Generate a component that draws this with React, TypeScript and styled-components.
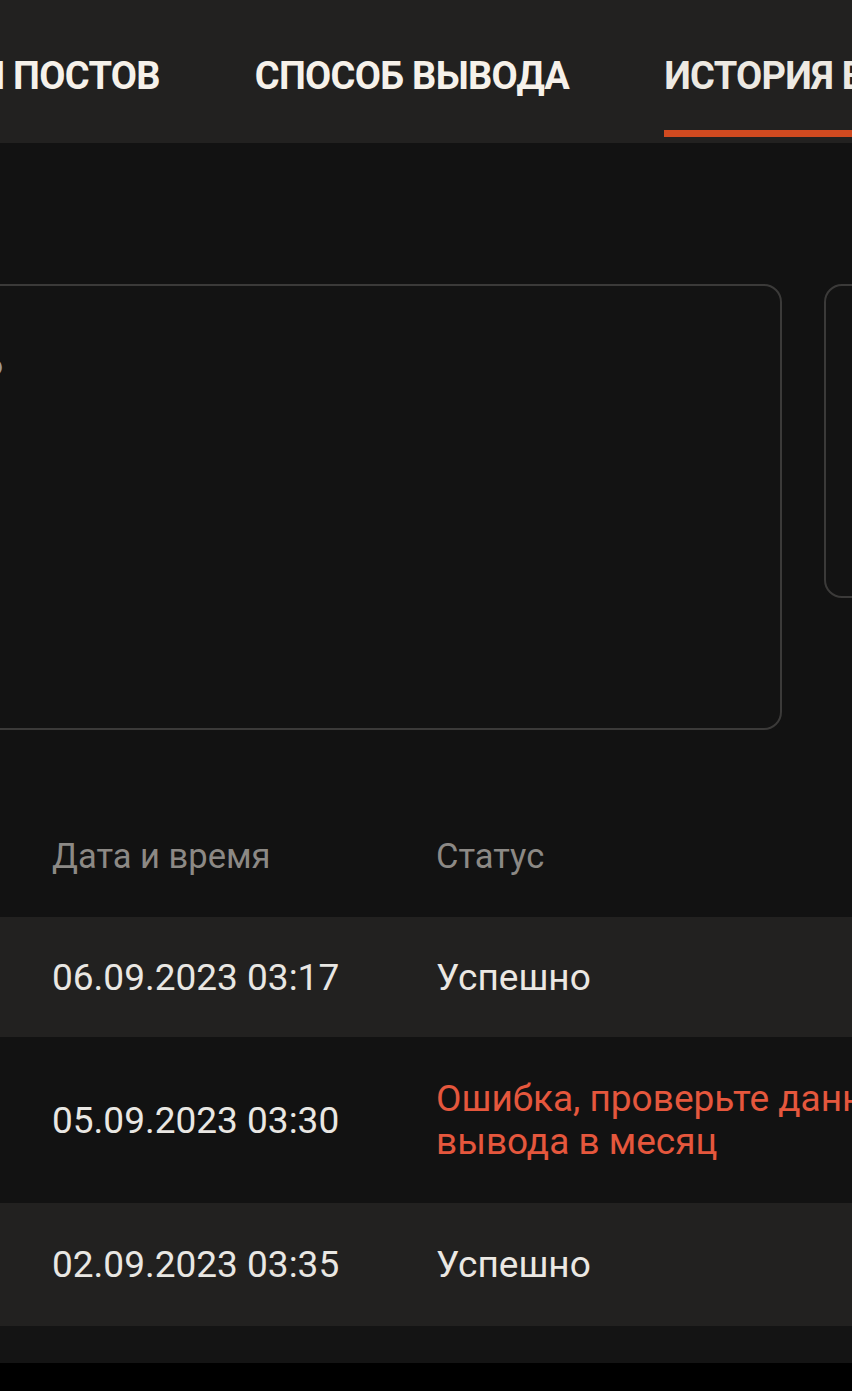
import styled, { createGlobalStyle } from 'styled-components';

const GlobalStyle = createGlobalStyle`
  html, body {
    margin: 0;
    padding: 0;
    background: #121212;
  }
  body {
    font-family: Roboto, 'Noto Sans', sans-serif;
    color: #e9e7e3;
  }
`;

const Screen = styled.div`
  width: 852px;
  height: 1391px;
  overflow: hidden;
  display: flex;
  flex-direction: column;
  background: #121212;
`;

const TabBar = styled.nav`
  height: 143px;
  flex-shrink: 0;
  background: #222120;
  display: flex;
  align-items: stretch;
  gap: 95px;
  overflow: hidden;
  white-space: nowrap;
`;

const Tab = styled.div<{ $active?: boolean; $shift?: number }>`
  display: flex;
  align-items: center;
  padding-top: 22px;
  margin-left: ${(p) => (p.$shift ? `${p.$shift}px` : '0')};
  font-size: 38px;
  font-weight: 700;
  text-transform: uppercase;
  letter-spacing: -0.7px;
  color: ${(p) => (p.$active ? '#ede9e2' : '#f6f1ea')};
  border-bottom: 7px solid ${(p) => (p.$active ? '#d04a20' : 'transparent')};
  margin-bottom: 6px;
`;

const Cards = styled.section`
  display: flex;
  gap: 42px;
  margin-top: 141px;
  height: 446px;
  align-items: flex-start;
`;

const Card = styled.div<{ $w: number; $h: number; $shift?: number }>`
  flex-shrink: 0;
  box-sizing: border-box;
  width: ${(p) => p.$w}px;
  height: ${(p) => p.$h}px;
  margin-left: ${(p) => (p.$shift ? `${p.$shift}px` : '0')};
  border: 2px solid #3b3a39;
  border-radius: 18px;
  background: #131313;
  padding: 63px 0 0 0;
  display: flex;
  justify-content: flex-end;
`;

const CardLabel = styled.span`
  align-self: flex-start;
  font-size: 28px;
  color: #9c9994;
  margin-right: 777px;
`;

const Table = styled.section`
  margin-top: 94px;
  display: flex;
  flex-direction: column;
`;

const HeadRow = styled.div`
  display: grid;
  grid-template-columns: 384px 1fr;
  box-sizing: border-box;
  padding: 12px 0 0 52px;
  height: 93px;
  align-items: start;
  font-size: 34.5px;
  color: #8c8985;
`;

const Row = styled.div<{ $h: number; $alt?: boolean }>`
  display: grid;
  grid-template-columns: 384px 1fr;
  padding-left: 52px;
  height: ${(p) => p.$h}px;
  align-items: center;
  background: ${(p) => (p.$alt ? '#222120' : '#121212')};
  font-size: 37px;
  color: #e9e7e3;
  white-space: nowrap;
`;

const Status = styled.div<{ $error?: boolean }>`
  color: ${(p) => (p.$error ? '#e5573d' : '#ebe8e3')};
  line-height: 43px;
`;

const Gap = styled.div`
  height: 37px;
  background: #141414;
`;

const NavBar = styled.div`
  flex: 1;
  background: #000;
`;

const rows = [
  { date: '06.09.2023 03:17', status: ['Успешно'], h: 120, alt: true },
  {
    date: '05.09.2023 03:30',
    status: ['Ошибка, проверьте данные или лимит', 'вывода в месяц'],
    h: 166,
    error: true,
  },
  { date: '02.09.2023 03:35', status: ['Успешно'], h: 123, alt: true },
];

function App() {
  return (
    <>
      <GlobalStyle />
      <Screen>
        <TabBar>
          <Tab $shift={-218}>Настройки постов</Tab>
          <Tab>Способ вывода</Tab>
          <Tab $active>История выводов</Tab>
        </TabBar>
        <Cards>
          <Card $w={901} $h={446} $shift={-119}>
            <CardLabel>Доступно</CardLabel>
          </Card>
          <Card $w={400} $h={314} />
        </Cards>
        <Table>
          <HeadRow>
            <div>Дата и время</div>
            <div>Статус</div>
          </HeadRow>
          {rows.map((r) => (
            <Row key={r.date} $h={r.h} $alt={r.alt}>
              <div>{r.date}</div>
              <Status $error={r.error}>
                {r.status.map((s) => (
                  <div key={s}>{s}</div>
                ))}
              </Status>
            </Row>
          ))}
          <Gap />
        </Table>
        <NavBar />
      </Screen>
    </>
  );
}

export default App;
